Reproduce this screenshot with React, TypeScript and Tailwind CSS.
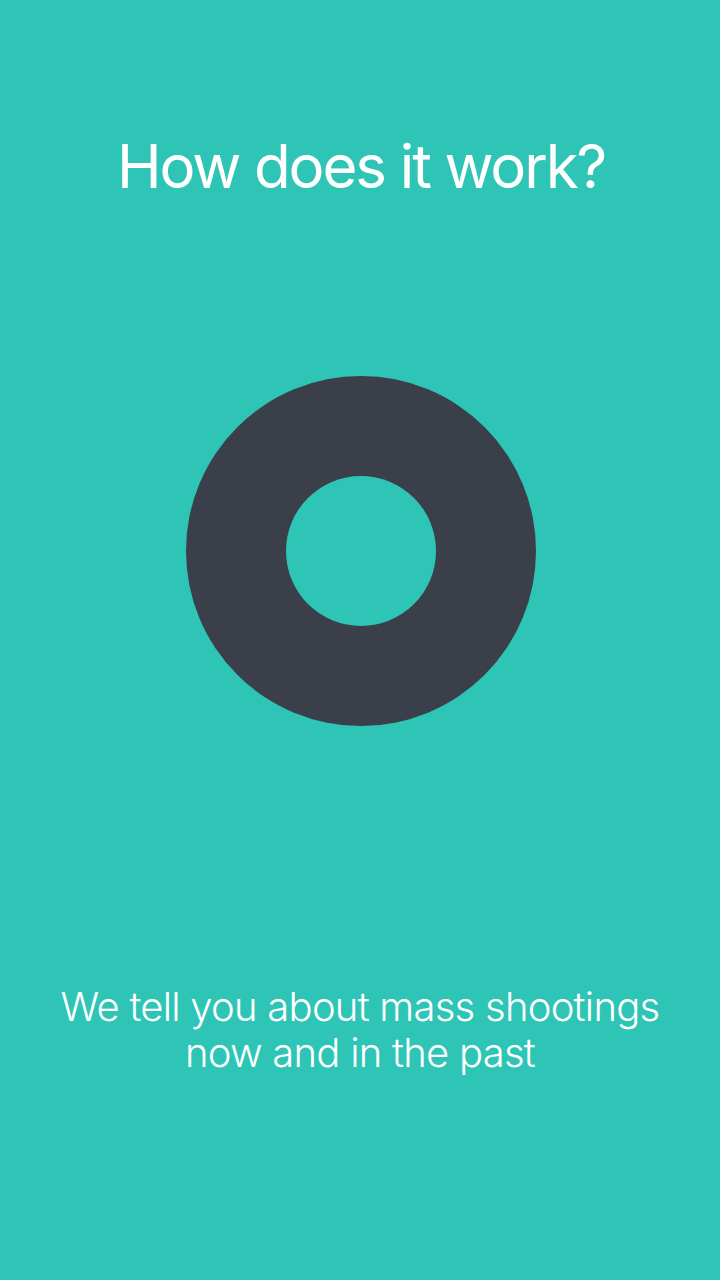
export default function App() {
  return (
    <div className="flex h-[1280px] w-[720px] flex-col items-center bg-[#2ec5b6] pt-[136px] font-['Inter','Roboto',sans-serif] text-white">
      <h1 className="ml-[2px] text-[60px] leading-none font-normal tracking-[-2.1px]">How does it work?</h1>
      <div className="mt-[180px] ml-[2px] flex h-[350px] w-[350px] items-center justify-center rounded-full bg-[#3a3f4a]">
        <div className="h-[150px] w-[150px] rounded-full bg-[#2ec5b6]" />
      </div>
      <p className="mt-[258px] text-center text-[40px] leading-[46px] font-light tracking-[-0.75px]">
        We tell you about mass shootings
        <br />
        now and in the past
      </p>
    </div>
  );
}
